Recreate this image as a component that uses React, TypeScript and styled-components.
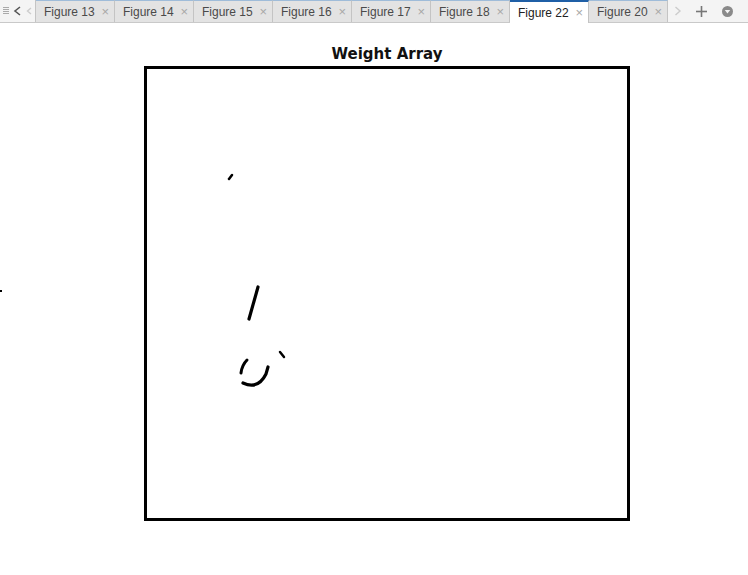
import React from "react";
import styled, { createGlobalStyle } from "styled-components";

const Global = createGlobalStyle`
  html, body { margin: 0; padding: 0; background: #ffffff; }
  body { font-family: "Liberation Sans", Arial, sans-serif; }
`;

const Page = styled.div`
  width: 748px;
  height: 575px;
  position: relative;
  background: #fff;
  overflow: hidden;
`;

const TabBar = styled.div`
  display: flex;
  align-items: stretch;
  height: 22px;
  border-bottom: 1px solid #c9c9c9;
  background: #f4f4f4;
`;

const Grip = styled.div`
  width: 11px;
  display: flex;
  align-items: center;
  justify-content: center;
`;

const NavButton = styled.div<{ $dim?: boolean; $w?: number }>`
  width: ${(p) => p.$w ?? 12}px;
  display: flex;
  align-items: center;
  justify-content: center;
  color: ${(p) => (p.$dim ? "#c8c8c8" : "#555")};
`;

const Tabs = styled.div`
  display: flex;
  border-left: 1px solid #c4c4c4;
`;

const Tab = styled.div<{ $active?: boolean }>`
  width: 79px;
  box-sizing: border-box;
  display: flex;
  align-items: center;
  justify-content: space-between;
  padding: 0 5px 0 8px;
  font-size: 12px;
  color: ${(p) => (p.$active ? "#222" : "#4a4a4a")};
  background: ${(p) => (p.$active ? "#ffffff" : "#e3e3e3")};
  border-top: ${(p) => (p.$active ? "2px solid #1f5fa6" : "1px solid #9fbcd9")};
  border-right: 1px solid #c4c4c4;
  margin-bottom: ${(p) => (p.$active ? "-1px" : "0")};
`;

const Close = styled.span`
  color: #a8a8a8;
  font-size: 13px;
  line-height: 1;
`;

const Tools = styled.div`
  display: flex;
  align-items: center;
`;

const FigureArea = styled.div`
  padding-left: 144px;
  padding-top: 21px;
  display: flex;
  flex-direction: column;
  width: 486px;
`;

const Title = styled.div`
  text-align: center;
  font-family: "DejaVu Sans", sans-serif;
  font-weight: bold;
  font-size: 15px;
  color: #111;
  height: 22px;
  line-height: 20px;
`;

const Axes = styled.div`
  width: 486px;
  height: 455px;
  box-sizing: border-box;
  border: 3px solid #000;
  position: relative;
`;

const Plot = styled.svg`
  position: absolute;
  left: 0;
  top: 0;
`;

const StrayDot = styled.div`
  position: absolute;
  left: 0;
  top: 290px;
  width: 2px;
  height: 2px;
  background: #000;
`;

const names = ["13", "14", "15", "16", "17", "18", "22", "20"];

export default function App() {
  return (
    <Page>
      <Global />
      <TabBar>
        <Grip>
          <svg width="6" height="10" viewBox="0 0 6 10">
            <g stroke="#aaa" strokeWidth="1">
              <line x1="0" y1="1.5" x2="6" y2="1.5" />
              <line x1="0" y1="3.5" x2="6" y2="3.5" />
              <line x1="0" y1="5.5" x2="6" y2="5.5" />
              <line x1="0" y1="7.5" x2="6" y2="7.5" />
            </g>
          </svg>
        </Grip>
        <NavButton $w={12}>
          <svg width="8" height="10" viewBox="0 0 8 10">
            <polyline points="7,1 2,5 7,9" fill="none" stroke="#555" strokeWidth="1.6" />
          </svg>
        </NavButton>
        <NavButton $dim $w={12}>
          <svg width="6" height="8" viewBox="0 0 6 8">
            <polyline points="5,1 1.5,4 5,7" fill="none" stroke="#ccc" strokeWidth="1.4" />
          </svg>
        </NavButton>
        <Tabs>
          {names.map((n) => (
            <Tab key={n} $active={n === "22"}>
              <span>Figure {n}</span>
              <Close>×</Close>
            </Tab>
          ))}
        </Tabs>
        <Tools>
          <NavButton $dim $w={20}>
            <svg width="8" height="10" viewBox="0 0 8 10">
              <polyline points="1.5,1 6,5 1.5,9" fill="none" stroke="#ccc" strokeWidth="1.4" />
            </svg>
          </NavButton>
          <NavButton $w={26}>
            <svg width="11" height="11" viewBox="0 0 11 11">
              <line x1="5.5" y1="0" x2="5.5" y2="11" stroke="#777" strokeWidth="1.6" />
              <line x1="0" y1="5.5" x2="11" y2="5.5" stroke="#777" strokeWidth="1.6" />
            </svg>
          </NavButton>
          <NavButton $w={26}>
            <svg width="11" height="11" viewBox="0 0 11 11">
              <circle cx="5.5" cy="5.5" r="5.5" fill="#8a8a8a" />
              <polygon points="2.8,4 8.2,4 5.5,7.4" fill="#f4f4f4" />
            </svg>
          </NavButton>
        </Tools>
      </TabBar>
      <FigureArea>
        <Title>Weight Array</Title>
        <Axes>
          <Plot width="480" height="449" viewBox="0 0 480 449">
            <g fill="none" stroke="#000" strokeLinecap="round">
              <line x1="82" y1="110" x2="85" y2="106" strokeWidth="2.5" />
              <line x1="111" y1="218" x2="102" y2="250" strokeWidth="3.2" />
              <path d="M100 291 Q95 296 94 304" strokeWidth="3" />
              <path d="M96 314 Q111 321 119 305 L121 298" strokeWidth="3.2" />
              <line x1="133" y1="283" x2="137" y2="288" strokeWidth="2.5" />
            </g>
          </Plot>
        </Axes>
      </FigureArea>
      <StrayDot />
    </Page>
  );
}
